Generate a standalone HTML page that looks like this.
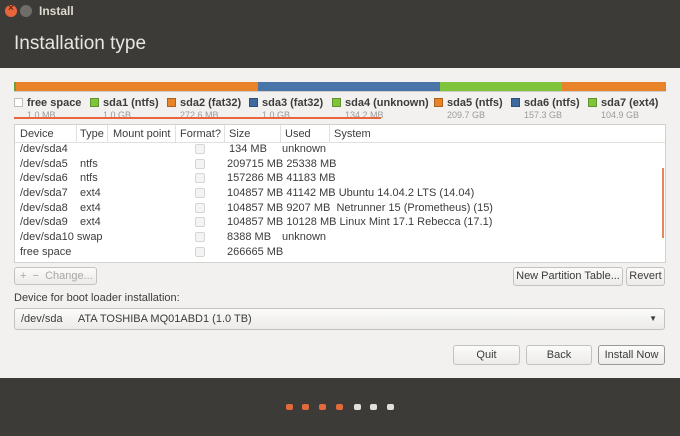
<!DOCTYPE html>
<html><head><style>
*{margin:0;padding:0;box-sizing:border-box}
body{width:680px;height:436px;overflow:hidden;background:#f2f1f0;font-family:"Liberation Sans","DejaVu Sans",sans-serif;position:relative;color:#3c3c3c}
.a{position:absolute;white-space:nowrap}
.t{font-size:11px}
.btn{position:absolute;border:1px solid #c4c2be;border-radius:3px;background:linear-gradient(#fbfbfa,#ecebe9);font-size:11px;text-align:center;color:#3c3c3c}
.sq{display:inline-block;width:9px;height:9px;vertical-align:-1px;margin-right:4px;border:1px solid rgba(0,0,0,.25)}
.lg{font-size:11px;font-weight:bold;color:#3c3c3c}
.sz{font-size:9px;color:#9a9a9a}
.row{position:absolute;left:20px;font-size:11px;height:15px;line-height:15px}
.cb{position:absolute;left:195px;width:10px;height:10px;border:1px solid #d6d5d2;border-radius:2px;background:#f4f4f4}
.dot{position:absolute;top:404px;width:7px;height:6px;border-radius:2px}
</style></head><body>
<div class="a" style="left:0;top:0;width:680px;height:68px;background:#3c3b37"></div>
<div class="a" style="left:5px;top:5px;width:12px;height:12px;border-radius:50%;background:#e9663c"></div>
<div class="a" style="left:8px;top:3px;font-size:10px;color:#6a2a14;font-weight:bold">×</div>
<div class="a" style="left:20px;top:5px;width:12px;height:12px;border-radius:50%;background:#6e6d69"></div>
<div class="a" style="left:39px;top:4px;font-size:12px;font-weight:bold;color:#dfdbd2">Install</div>
<div class="a" style="left:14px;top:33px;font-size:19px;color:#e8e6e1">Installation type</div>

<div class="a" style="left:14px;top:82px;width:652px;height:10px;display:flex;border-bottom:1px solid rgba(0,0,0,.15)">
<div style="width:2px;background:#6aa23c"></div>
<div style="width:242px;background:#e9832a"></div>
<div style="width:182px;background:#4a75a8"></div>
<div style="width:122px;background:#7fc43b"></div>
<div style="width:104px;background:#e9832a"></div>
</div>

<div class="a lg" style="left:14px;top:97px"><span class="sq" style="background:#fff"></span>free space</div>
<div class="a sz" style="left:27px;top:110px">1.0 MB</div>
<div class="a lg" style="left:90px;top:97px"><span class="sq" style="background:#7fc43b"></span>sda1 (ntfs)</div>
<div class="a sz" style="left:103px;top:110px">1.0 GB</div>
<div class="a lg" style="left:167px;top:97px"><span class="sq" style="background:#e9832a"></span>sda2 (fat32)</div>
<div class="a sz" style="left:180px;top:110px">272.6 MB</div>
<div class="a lg" style="left:249px;top:97px"><span class="sq" style="background:#3f6aa0"></span>sda3 (fat32)</div>
<div class="a sz" style="left:262px;top:110px">1.0 GB</div>
<div class="a lg" style="left:332px;top:97px"><span class="sq" style="background:#7fc43b"></span>sda4 (unknown)</div>
<div class="a sz" style="left:345px;top:110px">134.2 MB</div>
<div class="a lg" style="left:434px;top:97px"><span class="sq" style="background:#e9832a"></span>sda5 (ntfs)</div>
<div class="a sz" style="left:447px;top:110px">209.7 GB</div>
<div class="a lg" style="left:511px;top:97px"><span class="sq" style="background:#3f6aa0"></span>sda6 (ntfs)</div>
<div class="a sz" style="left:524px;top:110px">157.3 GB</div>
<div class="a lg" style="left:588px;top:97px"><span class="sq" style="background:#7fc43b"></span>sda7 (ext4)</div>
<div class="a sz" style="left:601px;top:110px">104.9 GB</div>
<div class="a" style="left:14px;top:117px;width:367px;height:2px;background:#e9663c"></div>

<div class="a" style="left:14px;top:124px;width:652px;height:139px;background:#fff;border:1px solid #d3d1cd"></div>
<div class="a" style="left:15px;top:125px;width:650px;height:18px;border-bottom:1px solid #e2e0dc"></div>
<div class="a t" style="left:20px;top:128px">Device</div>
<div class="a" style="left:76px;top:125px;width:1px;height:18px;background:#e2e0dc"></div>
<div class="a t" style="left:80px;top:128px">Type</div>
<div class="a" style="left:107px;top:125px;width:1px;height:18px;background:#e2e0dc"></div>
<div class="a t" style="left:113px;top:128px">Mount point</div>
<div class="a" style="left:175px;top:125px;width:1px;height:18px;background:#e2e0dc"></div>
<div class="a t" style="left:180px;top:128px">Format?</div>
<div class="a" style="left:224px;top:125px;width:1px;height:18px;background:#e2e0dc"></div>
<div class="a t" style="left:229px;top:128px">Size</div>
<div class="a" style="left:280px;top:125px;width:1px;height:18px;background:#e2e0dc"></div>
<div class="a t" style="left:285px;top:128px">Used</div>
<div class="a" style="left:329px;top:125px;width:1px;height:18px;background:#e2e0dc"></div>
<div class="a t" style="left:334px;top:128px">System</div>

<div class="row" style="top:142px;width:640px"><span class="a" style="left:0">/dev/sda4</span><span class="a" style="left:209px">134 MB</span><span class="a" style="left:262px">unknown</span></div>
<div class="row" style="top:157px"><span class="a" style="left:0">/dev/sda5</span><span class="a" style="left:60px">ntfs</span><span class="a" style="left:207px">209715 MB 25338 MB</span></div>
<div class="row" style="top:171px"><span class="a" style="left:0">/dev/sda6</span><span class="a" style="left:60px">ntfs</span><span class="a" style="left:207px">157286 MB 41183 MB</span></div>
<div class="row" style="top:186px"><span class="a" style="left:0">/dev/sda7</span><span class="a" style="left:60px">ext4</span><span class="a" style="left:207px">104857 MB 41142 MB Ubuntu 14.04.2 LTS (14.04)</span></div>
<div class="row" style="top:201px"><span class="a" style="left:0">/dev/sda8</span><span class="a" style="left:60px">ext4</span><span class="a" style="left:207px">104857 MB 9207 MB &nbsp;Netrunner 15 (Prometheus) (15)</span></div>
<div class="row" style="top:215px"><span class="a" style="left:0">/dev/sda9</span><span class="a" style="left:60px">ext4</span><span class="a" style="left:207px">104857 MB 10128 MB Linux Mint 17.1 Rebecca (17.1)</span></div>
<div class="row" style="top:230px"><span class="a" style="left:0">/dev/sda10 swap</span><span class="a" style="left:207px">8388 MB</span><span class="a" style="left:262px">unknown</span></div>
<div class="row" style="top:245px"><span class="a" style="left:0">free space</span><span class="a" style="left:207px">266665 MB</span></div>
<div class="cb" style="top:144px"></div><div class="cb" style="top:159px"></div><div class="cb" style="top:173px"></div><div class="cb" style="top:188px"></div><div class="cb" style="top:203px"></div><div class="cb" style="top:217px"></div><div class="cb" style="top:232px"></div><div class="cb" style="top:247px"></div>
<div class="a" style="left:662px;top:168px;width:2px;height:70px;background:#e9835a"></div>

<div class="btn" style="left:14px;top:267px;width:83px;height:18px;line-height:16px;color:#a9a7a3;text-align:left;padding-left:5px">+ &nbsp;− &nbsp;Change...</div>
<div class="btn" style="left:513px;top:267px;width:110px;height:19px;line-height:17px">New Partition Table...</div>
<div class="btn" style="left:626px;top:267px;width:39px;height:19px;line-height:17px">Revert</div>
<div class="a t" style="left:14px;top:292px">Device for boot loader installation:</div>
<div class="btn" style="left:14px;top:308px;width:651px;height:22px;line-height:20px;text-align:left;padding-left:6px">/dev/sda &nbsp;&nbsp;&nbsp;&nbsp;ATA TOSHIBA MQ01ABD1 (1.0 TB)<span class="a" style="right:7px;top:0;font-size:8px">▼</span></div>
<div class="btn" style="left:453px;top:345px;width:67px;height:20px;line-height:18px">Quit</div>
<div class="btn" style="left:526px;top:345px;width:66px;height:20px;line-height:18px">Back</div>
<div class="btn" style="left:598px;top:345px;width:67px;height:20px;line-height:18px;border-color:#9c9a96">Install Now</div>

<div class="a" style="left:0;top:378px;width:680px;height:58px;background:#3c3b37"></div>
<div class="dot" style="left:286px;background:#e36a3b"></div>
<div class="dot" style="left:302px;background:#e36a3b"></div>
<div class="dot" style="left:319px;background:#e36a3b"></div>
<div class="dot" style="left:336px;background:#e36a3b"></div>
<div class="dot" style="left:354px;background:#e2e0dc"></div>
<div class="dot" style="left:370px;background:#e2e0dc"></div>
<div class="dot" style="left:387px;background:#e2e0dc"></div>
</body></html>
